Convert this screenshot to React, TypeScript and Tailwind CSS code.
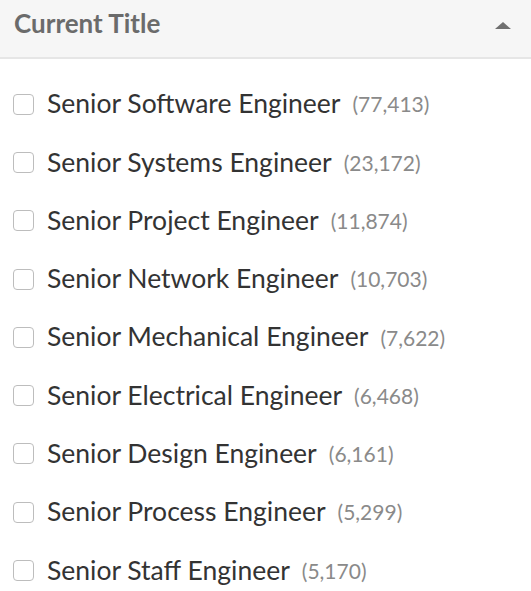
import React from "react";

const titles: [string, string][] = [
  ["Senior Software Engineer", "77,413"],
  ["Senior Systems Engineer", "23,172"],
  ["Senior Project Engineer", "11,874"],
  ["Senior Network Engineer", "10,703"],
  ["Senior Mechanical Engineer", "7,622"],
  ["Senior Electrical Engineer", "6,468"],
  ["Senior Design Engineer", "6,161"],
  ["Senior Process Engineer", "5,299"],
  ["Senior Staff Engineer", "5,170"],
];

const App: React.FC = () => {
  return (
    <div className="w-[531px] h-[591px] overflow-hidden bg-white font-['Lato',sans-serif]">
      <div className="flex h-[59px] items-center justify-between border-b-2 border-[#e6e6e6] bg-[#f6f6f6] pb-[10px] pl-[14px] pr-[20px]">
        <h2 className="text-[26px] font-bold text-[#6b6b6b]">Current Title</h2>
        <svg width="16" height="7" viewBox="0 0 16 7" className="mt-[4px]">
          <path d="M0 7 L8 0 L16 7 Z" fill="#707070" />
        </svg>
      </div>
      <ul className="flex flex-col pt-[16px]">
        {titles.map(([name, count]) => (
          <li key={name} className="flex h-[58.3px] items-center">
            <span className="ml-[13px] h-[21px] w-[21px] rounded-[4px] border-[1.5px] border-[#bdbdbd] bg-white" />
            <span className="ml-[13px] text-[26.5px] text-[#333333]">{name}</span>
            <span className="ml-[12px] text-[21px] text-[#8a8a8a]">({count})</span>
          </li>
        ))}
      </ul>
    </div>
  );
};

export default App;
